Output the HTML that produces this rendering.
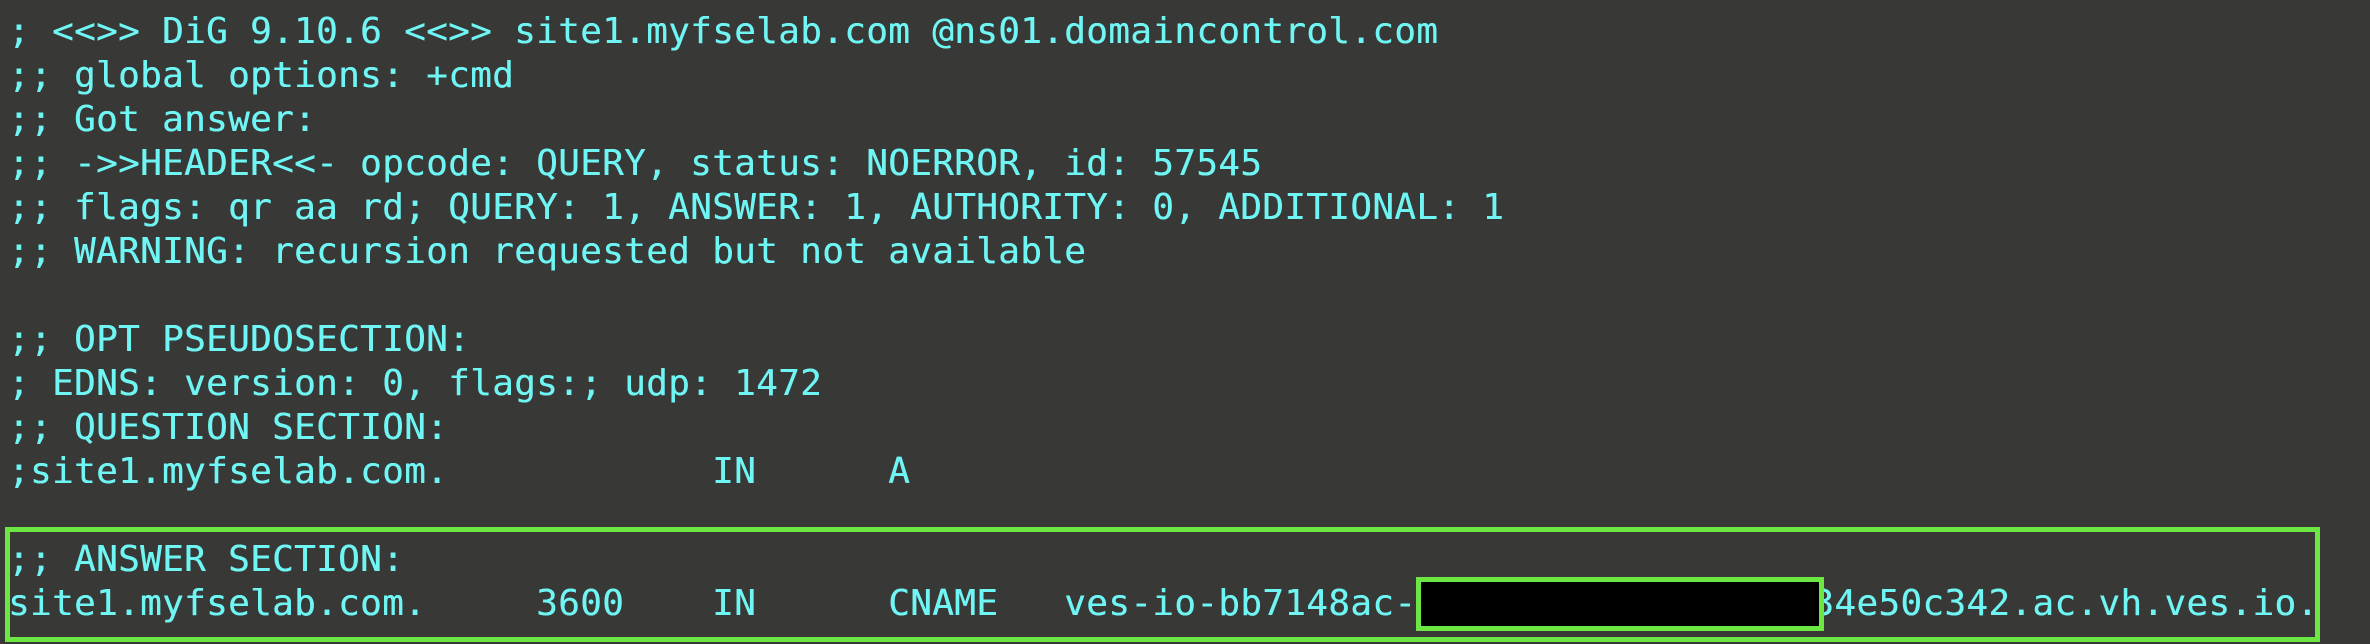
<!DOCTYPE html>
<html><head><meta charset="utf-8"><style>
html,body{margin:0;padding:0;}
body{width:2370px;height:644px;background:#383836;overflow:hidden;position:relative;}
pre{position:absolute;left:8px;top:10px;margin:0;font-family:"DejaVu Sans Mono","Liberation Mono",monospace;font-size:36px;line-height:44px;letter-spacing:0.33px;color:#6ff6f4;white-space:pre;text-shadow:0.3px 0 0 #6ff6f4;}
.box{position:absolute;left:5px;top:527px;width:2305px;height:105px;border:5px solid #6ce642;}
.red{position:absolute;left:1416px;top:577px;width:398px;height:44px;border:5px solid #6ce642;background:#000;}
</style></head><body>
<pre>; &lt;&lt;&gt;&gt; DiG 9.10.6 &lt;&lt;&gt;&gt; site1.myfselab.com @ns01.domaincontrol.com
;; global options: +cmd
;; Got answer:
;; -&gt;&gt;HEADER&lt;&lt;- opcode: QUERY, status: NOERROR, id: 57545
;; flags: qr aa rd; QUERY: 1, ANSWER: 1, AUTHORITY: 0, ADDITIONAL: 1
;; WARNING: recursion requested but not available

;; OPT PSEUDOSECTION:
; EDNS: version: 0, flags:; udp: 1472
;; QUESTION SECTION:
;site1.myfselab.com.            IN      A

;; ANSWER SECTION:
site1.myfselab.com.     3600    IN      CNAME   ves-io-bb7148ac-                  34e50c342.ac.vh.ves.io.</pre>
<div class="box"></div>
<div class="red"></div>
</body></html>
